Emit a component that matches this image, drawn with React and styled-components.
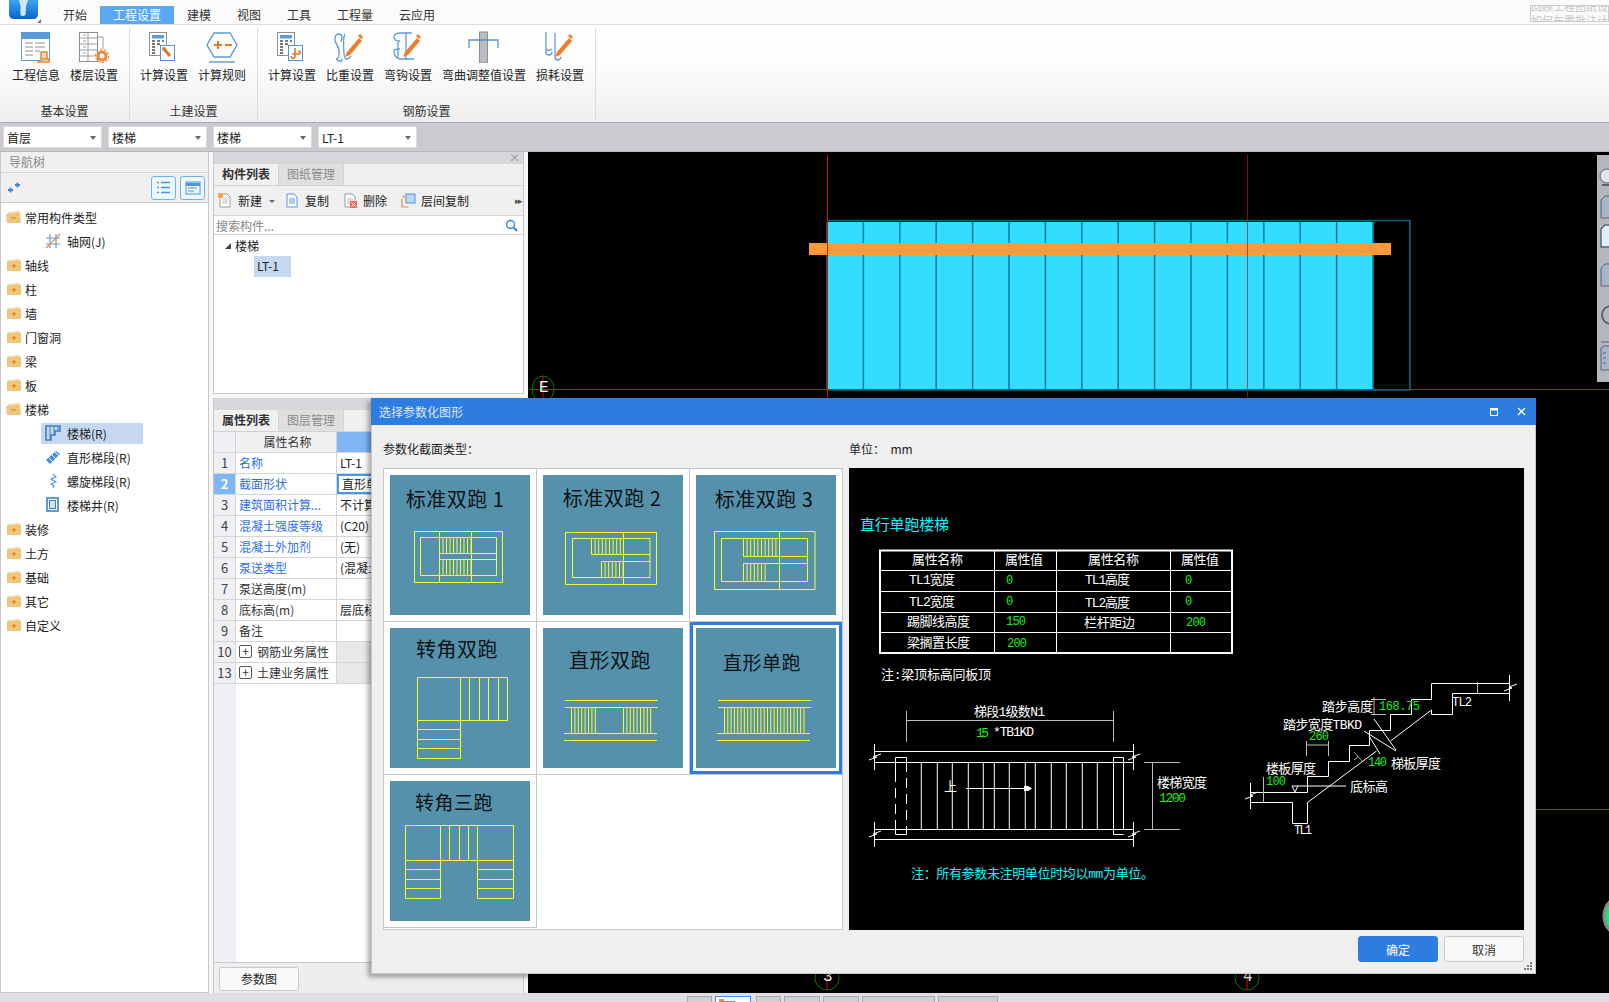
import React from 'react'
import styled, { createGlobalStyle } from 'styled-components'

const GlobalStyle = createGlobalStyle`
  html, body { margin: 0; padding: 0; background: #fff; }
  body {
    font-family: "Noto Sans CJK SC", "Liberation Sans", sans-serif;
    font-size: 12px;
    color: #222;
  }
  * { box-sizing: border-box; }
`

const Page = styled.div`
  position: relative;
  width: 1609px;
  height: 1002px;
  overflow: hidden;
  display: flex;
  flex-direction: column;
  background: #f2f2f2;
`

/* ---------- menu bar ---------- */
const MenuBar = styled.div`
  height: 25px;
  flex: none;
  display: flex;
  align-items: flex-end;
  background: #fbfbfb;
  border-bottom: 1px solid #dcdcdc;
`
const LogoBox = styled.div`
  width: 46px;
  height: 24px;
  flex: none;
  background: #fff;
  margin-right: 4px;
`
const MenuTab = styled.div`
  height: 18px;
  line-height: 18px;
  padding: 0 13px;
  text-align: center;
  font-size: 12px;
  color: ${p => (p.$active ? '#fff' : '#333')};
  background: ${p => (p.$active ? '#5aa7f3' : 'transparent')};
`
const NewsBox = styled.div`
  margin-left: auto;
  margin-bottom: 2px;
  width: 79px;
  height: 17px;
  border: 1px solid #ccc;
  overflow: hidden;
  font-size: 11px;
  line-height: 14px;
  color: #c4c4c4;
  white-space: nowrap;
  & > div:first-child { margin-top: -7px; }
`

/* ---------- ribbon ---------- */
const Ribbon = styled.div`
  height: 98px;
  flex: none;
  display: flex;
  background: linear-gradient(#ffffff 0%, #fdfdfd 40%, #eeeeee 100%);
  border-bottom: 1px solid #a9adb3;
`
const RibbonGroup = styled.div`
  width: ${p => p.$w}px;
  margin: 3px 0 2px;
  padding-left: ${p => p.$pad}px;
  border-right: 1px solid #dcdcdc;
  display: flex;
  flex-direction: column;
`
const RibbonButtons = styled.div`
  display: flex;
  gap: 10px;
  flex: 1;
`
const RibbonButton = styled.div`
  display: flex;
  flex-direction: column;
  align-items: center;
  padding-top: 3px;
  white-space: nowrap;
  svg { display: block; height: 32px; margin-bottom: 3px; }
`
const GroupTitle = styled.div`
  text-align: center;
  height: 22px;
  margin-left: -${p => p.$pad}px;
  padding-top: 2px;
  line-height: 22px;
  color: #333;
`

/* ---------- combo bar ---------- */
const ComboBar = styled.div`
  height: 29px;
  flex: none;
  display: flex;
  gap: 6px;
  padding: 3px 3px 0;
  background: #c9cbcf;
  border-bottom: 1px solid #b5b7bb;
`
const Combo = styled.div`
  width: 99px;
  height: 22px;
  background: #fff;
  border: 1px solid #d9d9d9;
  display: flex;
  align-items: center;
  justify-content: space-between;
  padding: 0 5px 0 3px;
  &::after {
    content: '';
    border: 3px solid transparent;
    border-top: 4px solid #666;
    margin-top: 4px;
  }
`

/* ---------- workspace ---------- */
const Workspace = styled.div`
  flex: 1;
  min-height: 0;
  display: flex;
  background: #f6f6f6;
`
const NavPanel = styled.div`
  width: 209px;
  flex: none;
  display: flex;
  flex-direction: column;
  background: #fff;
  border-right: 1px solid #c4c7cc;
  border-bottom: 1px solid #c4c7cc;
  border-left: 1px solid #c4c7cc;
`
const NavHeader = styled.div`
  height: 21px;
  line-height: 19px;
  padding-left: 8px;
  color: #888;
  background: #f0f0f0;
  border-bottom: 1px solid #d0d2d6;
`
const NavTools = styled.div`
  height: 30px;
  display: flex;
  align-items: center;
  gap: 4px;
  padding: 0 3px 0 6px;
  background: #f0f0f0;
  border-bottom: 1px solid #c9ccd1;
  & > svg { margin-right: auto; }
`
const ToolToggle = styled.div`
  width: 25px;
  height: 24px;
  border: 1px solid #6db0f3;
  border-radius: 3px;
  background: #eef6fe;
  display: flex;
  align-items: center;
  justify-content: center;
`
const TreeList = styled.div`
  padding-top: 2px;
`
const TreeRow = styled.div`
  height: 24px;
  display: flex;
  align-items: center;
  padding-left: ${p => (p.$child ? 40 : 5)}px;
`
const TreeLabel = styled.div`
  display: flex;
  align-items: center;
  height: 21px;
  gap: ${p => (p.$child ? 6 : 3)}px;
  padding: 0 ${p => (p.$child ? 4 : 0)}px;
  width: ${p => (p.$child ? '102px' : 'auto')};
  background: ${p => (p.$selected ? '#c6d8f0' : 'transparent')};
  white-space: nowrap;
`

const MiddleColumn = styled.div`
  width: 311px;
  flex: none;
  margin: 0 4px;
  display: flex;
  flex-direction: column;
  gap: 4px;
`
const Panel = styled.div`
  display: flex;
  flex-direction: column;
  height: ${p => (p.$h ? `${p.$h}px` : 'auto')};
  flex: ${p => (p.$h ? 'none' : 1)};
  min-height: 0;
  border-right: 1px solid #c4c7cc;
  border-left: 1px solid #c4c7cc;
  border-bottom: ${p => (p.$h ? '1px solid #c4c7cc' : 'none')};
  background: #fff;
`
const PanelGrip = styled.div`
  height: 12px;
  flex: none;
  background: #d6d7da;
  color: #888;
  text-align: right;
  padding-right: 3px;
  font-size: 11px;
  line-height: 10px;
`
const TabStrip = styled.div`
  height: 22px;
  flex: none;
  display: flex;
  background: #f0f0f0;
  border-bottom: 1px solid #d0d2d6;
`
const PanelTab = styled.div`
  width: 65px;
  text-align: center;
  line-height: 20px;
  color: ${p => (p.$active ? '#333' : '#8c8c8c')};
  font-weight: ${p => (p.$active ? 700 : 400)};
  background: ${p => (p.$active ? '#f0f0f0' : '#dfdfdf')};
  border-right: 1px solid #d0d2d6;
`
const PanelTools = styled.div`
  height: 30px;
  flex: none;
  display: flex;
  align-items: center;
  padding-left: 4px;
  background: #f0f0f0;
  border-bottom: 1px solid #d0d2d6;
`
const PanelTool = styled.div`
  display: flex;
  align-items: center;
  gap: 5px;
  margin-right: ${p => p.$gap}px;
`
const Caret = styled.span`
  border: 3px solid transparent;
  border-top: 3px solid #666;
  margin: 4px 10px 0 7px;
`
const MoreMark = styled.span`
  margin-left: auto;
  padding-right: 2px;
  font-size: 9px;
  letter-spacing: -2px;
  color: #555;
`
const SearchRow = styled.div`
  height: 19px;
  flex: none;
  display: flex;
  align-items: center;
  justify-content: space-between;
  padding: 0 5px 0 2px;
  color: #888;
  border-bottom: 1px solid #d0d2d6;
`
const CompRoot = styled.div`
  height: 21px;
  display: flex;
  align-items: center;
  gap: 4px;
  padding-left: 11px;
  &::before {
    content: '';
    border-right: 6px solid #444;
    border-top: 6px solid transparent;
  }
`
const CompLeaf = styled.div`
  width: 37px;
  height: 21px;
  line-height: 20px;
  margin-left: 40px;
  padding-left: 3px;
  background: #c6d8f0;
`

const PropRow = styled.div`
  display: grid;
  grid-template-columns: 22px 101px 1fr;
  height: 21px;
  flex: none;
  border-bottom: 1px solid #d5d5d5;
`
const PropNo = styled.div`
  text-align: center;
  line-height: 20px;
  font-size: 13px;
  color: ${p => (p.$active ? '#fff' : '#444')};
  font-weight: ${p => (p.$active ? 700 : 400)};
  background: ${p => (p.$active ? '#7db8f5' : '#eef0f3')};
  border-right: 1px solid #d5d5d5;
`
const PropName = styled.div`
  display: flex;
  align-items: center;
  gap: 5px;
  padding-left: 3px;
  padding-bottom: 1px;
  white-space: nowrap;
  color: ${p => (p.$blue ? '#2f6fe6' : '#333')};
  background: ${p => (p.$head ? '#f0f0f0' : '#fff')};
  justify-content: ${p => (p.$head ? 'center' : 'flex-start')};
  border-right: 1px solid #d5d5d5;
`
const PropValue = styled.div`
  padding-left: 3px;
  line-height: ${p => (p.$active ? '16px' : '19px')};
  white-space: nowrap;
  background: ${p => (p.$head ? '#7fb6f6' : p.$group ? '#e8e8e8' : '#fff')};
  border: ${p => (p.$active ? '2px solid #4a97ea' : 'none')};
`
const ExpandBox = styled.span`
  width: 13px;
  height: 13px;
  border: 1px solid #555;
  border-radius: 2px;
  text-align: center;
  line-height: 10px;
  font-size: 12px;
`
const PropFiller = styled.div`
  flex: 1;
  min-height: 0;
  display: grid;
  grid-template-columns: 22px 1fr;
  & > div:first-child { background: #eef0f3; }
  border-bottom: 1px solid #c4c7cc;
`
const PropFooter = styled.div`
  height: 30px;
  flex: none;
  background: #eeeeee;
  padding: 4px 0 0 5px;
`
const PlainButton = styled.div`
  width: 80px;
  height: 24px;
  line-height: 22px;
  text-align: center;
  background: #fafafa;
  border: 1px solid #c4c9d4;
  border-radius: 3px;
`

/* ---------- CAD canvas ---------- */
const Canvas = styled.div`
  position: relative;
  flex: 1;
  min-width: 0;
  background: #000;
  overflow: hidden;
  svg.cad { display: block; }
`
const ViewTools = styled.div`
  position: absolute;
  top: 3px;
  right: 0;
  width: 12px;
  height: 227px;
  background: #b4b7bd;
  overflow: hidden;
`
const StatusBar = styled.div`
  height: 9px;
  flex: none;
  background: #dedfe2;
  padding: 3px 0 0 687px;
  display: flex;
  gap: 3px;
  overflow: hidden;
`
const StatusTab = styled.div`
  width: ${p => p.$w}px;
  margin-right: ${p => p.$gap || 0}px;
  height: 14px;
  background: ${p => (p.$active ? '#fff' : '#d0d0d2')};
  border: 1px solid ${p => (p.$active ? '#3b94f0' : '#a9a9ab')};
  padding: 2px 0 0 3px;
  svg { display: block; }
`

/* ---------- dialog ---------- */
const Dialog = styled.div`
  position: absolute;
  left: 371px;
  top: 398px;
  width: 1165px;
  height: 576px;
  display: flex;
  flex-direction: column;
  background: #efefef;
  border: 1px solid #c3c6cb;
  border-top: none;
  box-shadow: -3px 3px 5px rgba(0, 0, 0, 0.35);
`
const DialogTitle = styled.div`
  height: 27px;
  flex: none;
  display: flex;
  align-items: center;
  padding: 0 10px 0 8px;
  margin: 0 -1px;
  background: #2d7de0;
  color: #dfeaf8;
`
const TitleActions = styled.div`
  margin-left: auto;
  display: flex;
  align-items: center;
  gap: 19px;
`
const DialogBody = styled.div`
  display: flex;
  gap: 6px;
  padding: 0 11px 0 11px;
`
const SideColumn = styled.div`
  display: flex;
  flex-direction: column;
`
const SideLabel = styled.div`
  height: 43px;
  line-height: 47px;
  white-space: pre;
`
const TypeGrid = styled.div`
  width: 460px;
  height: 462px;
  border: 1px solid #c6c6c8;
  background: #fff;
  display: grid;
  grid-template-columns: 153px 153px 152px;
  grid-template-rows: 153px 153px 153px;
`
const TypeCell = styled.div`
  display: flex;
  align-items: center;
  justify-content: center;
  border-right: ${p => (p.$last ? 'none' : '1px solid #c6c6c8')};
  border-bottom: 1px solid #c6c6c8;
  box-shadow: ${p => (p.$selected ? 'inset 0 0 0 3px #2d7de0' : 'none')};
  svg { display: block; background: #5591ab; }
`
const Preview = styled.div`
  width: 675px;
  height: 462px;
  background: #000;
  svg { display: block; }
`
const DialogFooter = styled.div`
  display: flex;
  justify-content: flex-end;
  gap: 6px;
  padding: 6px 11px 0 0;
`
const DialogButton = styled.div`
  width: 80px;
  height: 26px;
  line-height: 25px;
  text-align: center;
  border-radius: 3px;
  color: ${p => (p.$primary ? '#fff' : '#333')};
  background: ${p => (p.$primary ? '#2d7de0' : '#f8f8f8')};
  border: 1px solid ${p => (p.$primary ? '#2d7de0' : '#c4c9d4')};
`
const ResizeGrip = styled.svg`
  position: absolute;
  right: 2px;
  bottom: 2px;
`
const CadText = styled.text`
  font-family: "Liberation Mono", "Noto Sans CJK SC", monospace;
  font-size: ${p => p.$size || 13}px;
  fill: ${p => p.$fill || '#fff'};
  dominant-baseline: central;
`
const ThumbText = styled.text`
  font-family: "Noto Sans CJK SC", sans-serif;
  font-size: ${p => p.$size || 20}px;
  letter-spacing: 0.5px;
  fill: #0c1215;
  text-anchor: middle;
  dominant-baseline: central;
`

/* ---------- small icons ---------- */
const FolderIcon = ({ open }) => (
  <svg width="16" height="14" viewBox="0 0 16 14">
    <path d="M2 2h5l1-1h6v3H2z" fill="#f5dca6" />
    <path d={open ? 'M0 4l14-1 1 10H1z' : 'M1 3h14v10H1z'} fill="#eec679" />
    {open ? <path d="M5 8h5" stroke="#d29a3a" strokeWidth="1.4" /> : <path d="M6 8h4M8 6v4" stroke="#d98f1f" strokeWidth="1.4" />}
  </svg>
)

const Glyph = ({ name }) => {
  if (name === 'grid') return (
    <svg width="16" height="16" viewBox="0 0 16 16" fill="none" strokeWidth="1.2">
      <path d="M5 1v14M11 1v14M1 5h14M1 11h14" stroke="#5c9ad8" />
      <path d="M1 15L15 1" stroke="#ee8a3c" />
    </svg>
  )
  if (name === 'stair') return (
    <svg width="16" height="16" viewBox="0 0 16 16" fill="none" stroke="#3a82d0" strokeWidth="1.6">
      <path d="M1 1h14v5H10v4H6v5H1z" />
      <path d="M5 1v14M9 1v9M13 1v5" strokeWidth="1" />
    </svg>
  )
  if (name === 'run') return (
    <svg width="16" height="16" viewBox="0 0 16 16">
      <path d="M1 11L11 2l4 3-10 10z" fill="#3f8ee0" />
      <path d="M4 9l4 4M7 6l4 4M10 3l4 4" stroke="#fff" />
    </svg>
  )
  if (name === 'spiral') return (
    <svg width="16" height="16" viewBox="0 0 16 16" fill="none" stroke="#4a90d9" strokeWidth="1.1">
      <path d="M8 1l3 3-5 2 5 3-5 2 3 2-1 2" />
    </svg>
  )
  return (
    <svg width="16" height="16" viewBox="0 0 16 16" fill="none">
      <rect x="2" y="1" width="11" height="13" stroke="#3a82d0" strokeWidth="1.6" />
      <rect x="4.5" y="3.5" width="6" height="8" fill="#d3e4f7" stroke="#3a82d0" />
    </svg>
  )
}

const DocIcon = ({ kind }) => (
  <svg width="15" height="15" viewBox="0 0 15 15" fill="none">
    {kind === 'layer' ? (
      <g>
        <rect x="5" y="1" width="9" height="9" fill="#bcd8f6" stroke="#4e94dc" />
        <path d="M4 3H2.5v2M1 6v8h6.5" stroke="#ee8a3c" strokeWidth="1.2" />
      </g>
    ) : (
      <g>
        <path d="M2 1h7l3 3v10H2z" fill="#fff" stroke={kind === 'copy' ? '#4e94dc' : '#999'} />
        <path d="M4 6h6M4 8h6M4 10h6" stroke={kind === 'copy' ? '#4e94dc' : '#bbb'} />
        {kind === 'new' && <path d="M0 0h5v5H0z" fill="#f3a64a" />}
        {kind === 'del' && <g><rect x="7" y="8" width="7" height="7" fill="#e66" /><path d="M8.5 9.5l4 4M12.5 9.5l-4 4" stroke="#fff" /></g>}
      </g>
    )}
  </svg>
)

const Calc = ({ children }) => (
  <g>
    <rect x="2.5" y="1.5" width="17" height="23" fill="#fff" stroke="#8b8e92" />
    <rect x="5" y="4" width="12" height="3.5" fill="#5c9ad8" />
    <path d="M5 10h3M10 10h3M15 10h2M5 13h3M10 13h3M5 16h3M5 19h3M5 22h3" stroke="#777" strokeWidth="2" />
    <rect x="13.5" y="14.5" width="14" height="15" fill="#fff" stroke="#4e94dc" />
    {children}
  </g>
)
const Pencil = () => (
  <g>
    <path d="M14 21L26 7l3 3-12 14-5 2z" fill="#ed7d2e" />
    <path d="M25 5l2-2 3 3-2 2z" fill="#ed7d2e" />
  </g>
)

const RibbonIcon = ({ name }) => {
  const common = { width: 34, height: 32, viewBox: '0 0 34 32', fill: 'none' }
  switch (name) {
    case 'info': return (
      <svg {...common}>
        <rect x="2.5" y="1.5" width="28" height="28" fill="#fff" stroke="#5c9ad8" />
        <rect x="2" y="1" width="29" height="7" fill="#5c9ad8" />
        <path d="M6 12h8M6 16h8M6 20h8M6 24h8M16 12h10M16 16h10M16 20h5" stroke="#8b8e92" />
        <path d="M18 31h12v-3h-8v-7h6v7" fill="#f2d7b8" stroke="#e08a3c" strokeWidth="1.5" />
      </svg>
    )
    case 'floor': return (
      <svg {...common}>
        <rect x="2.5" y="1.5" width="18" height="29" fill="#fff" stroke="#8b8e92" />
        <path d="M2 7h18M2 13h18M2 19h18M2 25h18M11 2v28M6 4h3M6 10h3M6 16h3M6 22h3" stroke="#9a9da1" />
        <path d="M20 6h6v12" stroke="#9a9da1" />
        <circle cx="25" cy="25" r="4" stroke="#ed8a3c" strokeWidth="3" />
        <circle cx="25" cy="25" r="6.5" stroke="#ed8a3c" strokeWidth="1.4" strokeDasharray="2 2" />
      </svg>
    )
    case 'calcWrench': return (
      <svg {...common}><Calc><path d="M17 18l6 7" stroke="#e07a24" strokeWidth="3" /><circle cx="17" cy="18" r="2" fill="#e07a24" /></Calc></svg>
    )
    case 'calcPlus': return (
      <svg {...common}><Calc><path d="M20 17v9c0 2-4 2-4-1M23 20c3 0 3 3 0 3h-6" stroke="#e07a24" strokeWidth="1.6" /></Calc></svg>
    )
    case 'rule': return (
      <svg {...common}>
        <path d="M9 2h16l7 12-7 12H9L2 14z" stroke="#5c9ad8" strokeWidth="1.4" />
        <path d="M9 14h8M13 10v8M20 14h7" stroke="#e07a24" strokeWidth="2" />
        <path d="M4 31h26" stroke="#5c9ad8" strokeWidth="1.4" />
      </svg>
    )
    case 'density': return (
      <svg {...common}>
        <path d="M6 3C1 3 1 10 4 14s3 14-1 14 M6 3c3 0 4 4 2 8M12 3c-2 2-2 25 1 25 2 0 4-1 5-3M3 28c3 3 6 3 6 0" stroke="#5c9ad8" strokeWidth="1.3" />
        <Pencil />
      </svg>
    )
    case 'hook': return (
      <svg {...common}>
        <path d="M3 6c0-4 4-4 6-4h12M3 6c0 4 4 4 6 4M7 10v18M15 2v26M3 20c0-2 4-2 6-2M3 20c0 4 2 7 6 8h14" stroke="#5c9ad8" strokeWidth="1.3" />
        <Pencil />
      </svg>
    )
    case 'bend': return (
      <svg {...common}>
        <rect x="12.5" y="1" width="8" height="31" fill="#b9bcc1" stroke="#8b8e92" />
        <path d="M2 17V9h29v8" stroke="#4e94dc" strokeWidth="1.3" />
      </svg>
    )
    default: return (
      <svg {...common}>
        <path d="M3 1v20c0 4 6 4 6 0M12 2v24c0 4 5 4 6 0M3 18c2 2 4 2 6 0" stroke="#5c9ad8" strokeWidth="1.3" />
        <Pencil />
      </svg>
    )
  }
}

/* ---------- stair thumbnails ---------- */
const rect = (x1, y1, x2, y2) => `M${x1} ${y1}H${x2}V${y2}H${x1}Z`
const hl = (x1, x2, y) => `M${x1} ${y}H${x2}`
const vl = (x, y1, y2) => `M${x} ${y1}V${y2}`
const hatch = (x1, x2, y1, y2, step) => {
  let d = ''
  for (let x = x1; x <= x2 + 0.01; x += step) d += vl(x, y1, y2)
  return d
}

const thumbs = [
  {
    title: '标准双跑 1', tx: 65, ty: 23,
    d: rect(24.5, 56.5, 112.5, 107.5) + rect(30.5, 62.5, 106.5, 100.5) + vl(49.5, 56, 107) + vl(81.5, 56, 107) +
      hl(49.5, 106.5, 78.5) + hl(49.5, 106.5, 84.5) + hatch(49.5, 81.5, 62.5, 78.5, 3.5) + hatch(49.5, 81.5, 84.5, 100.5, 3.5),
  },
  {
    title: '标准双跑 2', tx: 69, ty: 22,
    d: rect(22.5, 57.5, 113.5, 109.5) + rect(29.5, 63.5, 107, 102.5) + vl(80.5, 57, 109) +
      hl(48.5, 107, 79.5) + hl(58.5, 107, 86.5) + hatch(48.5, 80.5, 63.5, 79.5, 3.6) + hatch(58.5, 80.5, 86.5, 102.5, 3.6),
  },
  {
    title: '标准双跑 3', tx: 68, ty: 23,
    d: rect(18.5, 56.5, 119, 114.5) + rect(25.5, 63.5, 111.5, 106.5) + vl(83.5, 56, 114) +
      hl(47.5, 111.5, 81.5) + hl(47.5, 111.5, 88.5) + hatch(47.5, 83.5, 63.5, 81.5, 3.6) + hatch(47.5, 69.5, 88.5, 106.5, 3.6),
  },
  {
    title: '转角双跑', tx: 67, ty: 20,
    d: rect(27.5, 49.5, 117.5, 92.5) + rect(27.5, 92.5, 70.5, 130.5) + vl(70.5, 49, 92) + vl(79.5, 49, 92) + vl(89.5, 49, 92) +
      vl(98.5, 49, 92) + vl(108.5, 49, 92) + hl(27.5, 70.5, 101.5) + hl(27.5, 70.5, 111.5) + hl(27.5, 70.5, 120.5),
  },
  {
    title: '直形双跑', tx: 67, ty: 31,
    d: hl(22, 115, 72.5) + hl(22, 115, 79.5) + hl(21, 114, 105.5) + hl(21, 114, 112.5) +
      hatch(28.5, 55.5, 79.5, 105.5, 3.4) + hatch(80.5, 108, 79.5, 105.5, 3.4),
  },
  {
    title: '直形单跑', tx: 66, ty: 33, size: 19, selected: true,
    d: hl(22, 115, 72.5) + hl(22, 115, 79.5) + hl(21, 114, 105.5) + hl(21, 114, 112.5) + hatch(28.5, 108, 79.5, 105.5, 3.31),
  },
  {
    title: '转角三跑', tx: 64, ty: 20, size: 19,
    d: rect(15.5, 44.5, 123.5, 79.5) + vl(50.5, 44, 79) + vl(59.5, 44, 79) + vl(69.5, 44, 79) + vl(78.5, 44, 79) + vl(87.5, 44, 79) +
      rect(15.5, 79.5, 50.5, 117.5) + rect(87.5, 79.5, 123.5, 117.5) +
      hl(15.5, 50.5, 88.5) + hl(15.5, 50.5, 98.5) + hl(15.5, 50.5, 107.5) + hl(87.5, 123.5, 88.5) + hl(87.5, 123.5, 98.5) + hl(87.5, 123.5, 107.5),
  },
]

const StairThumb = ({ title, tx, ty, d, size }) => (
  <svg width="140" height="140" viewBox="0 0 140 140">
    <ThumbText x={tx} y={ty} $size={size}>{title}</ThumbText>
    <path d={d} fill="none" stroke="#f6ff2e" strokeWidth="1" />
  </svg>
)

/* ---------- parameter drawing shown in the dialog, in page coordinates ---------- */
const Green = '#18ee18'
const Cyan = '#18f0ff'

const ParamDrawing = () => {
  const treads = [71.3, 87.3, 102.3, 118.3, 133.3, 144.3, 159.3, 175.3, 185.3, 201.3, 216.3, 232.3, 247.3]
  return (
    <svg width="675" height="462" viewBox="849 468 675 462" fill="none">
      <CadText x="860" y="526" $size={15} $fill={Cyan} textLength="89">直行单跑楼梯</CadText>

      <path d="M880 550.5H1232V653H880Z" stroke="#fff" strokeWidth="2" />
      <path d="M880 570.5H1232M880 591.5H1232M880 612.5H1232M880 632.5H1232M994.5 550V653M1056.5 550V653M1170.5 550V653" stroke="#fff" />
      <CadText x="912" y="560" textLength="51">属性名称</CadText>
      <CadText x="1005" y="560" textLength="38">属性值</CadText>
      <CadText x="1088" y="560" textLength="51">属性名称</CadText>
      <CadText x="1181" y="560" textLength="38">属性值</CadText>

      <CadText x="909" y="580" textLength="46">TL1宽度</CadText>
      <CadText x="1006" y="581" $size={12} $fill={Green}>0</CadText>
      <CadText x="1085" y="580" textLength="45">TL1高度</CadText>
      <CadText x="1185" y="581" $size={12} $fill={Green}>0</CadText>

      <CadText x="909" y="602" textLength="46">TL2宽度</CadText>
      <CadText x="1006" y="602" $size={12} $fill={Green}>0</CadText>
      <CadText x="1085" y="603" textLength="45">TL2高度</CadText>
      <CadText x="1185" y="602" $size={12} $fill={Green}>0</CadText>

      <CadText x="907" y="622" textLength="63">踢脚线高度</CadText>
      <CadText x="1006" y="622" $size={12} $fill={Green} textLength="20">150</CadText>
      <CadText x="1084" y="623" textLength="51">栏杆距边</CadText>
      <CadText x="1186" y="623" $size={12} $fill={Green} textLength="20">200</CadText>

      <CadText x="907" y="643" textLength="63">梁搁置长度</CadText>
      <CadText x="1007" y="644" $size={12} $fill={Green} textLength="20">200</CadText>

      <CadText x="881" y="675" textLength="110">注:梁顶标高同板顶</CadText>

      <CadText x="974" y="712" textLength="71">梯段1级数N1</CadText>
      <path d="M906.5 711V742M1113.5 711V742M906 720.5H1113" stroke="#bbb" />
      <CadText x="976" y="733" $size={13} $fill={Green} textLength="13">15</CadText>
      <CadText x="993" y="732" textLength="41">*TB1KD</CadText>

      <path d="M875 751.5H1133M875 762.5H1133M875 829.5H1133M875 839.5H1133" stroke="#fff" />
      <path d="M874.5 744V770M874.5 822V847M1133.5 744V770M1133.5 822V847" stroke="#fff" />
      <path d="M869 760l8-3-4 0 8-3M869 837l8-3-4 0 8-3M1128 760l8-3-4 0 8-3M1128 837l8-3-4 0 8-3" stroke="#fff" />
      <path d="M895.5 772V757.5H906.5V762M906.5 829V834.5H895.5V822M1113.5 762V757.5H1123.5V829M1123.5 834.5H1113.5V829" stroke="#fff" />
      <path d="M895.5 772V829M906.5 762V829" stroke="#fff" strokeDasharray="10 6" />
      <path d={treads.map(t => `M${850 + t} 762V829`).join('')} stroke="#fff" />
      <path d="M1113.5 762V829" stroke="#fff" />
      <CadText x="944" y="787" $size={13}>上</CadText>
      <path d="M966 788.5H1024" stroke="#fff" />
      <path d="M1024 786H1028L1032 788.5L1028 791H1024Z" fill="#fff" />

      <path d="M1144 762.5H1180M1144 829.5H1180M1152.5 762V830" stroke="#bbb" />
      <CadText x="1157" y="783" textLength="50">楼梯宽度</CadText>
      <CadText x="1159" y="798" $size={13} $fill={Green} textLength="27">1200</CadText>

      <CadText x="911" y="874" $size={13} $fill={Cyan} textLength="243">注：所有参数未注明单位时均以mm为单位。</CadText>

      <path d="M1250.7 792.5H1307.5V776.5H1328.5V761.5H1349.5V745.5H1369.5V730.5H1390.5V714.5H1411.5V699.5H1431.5V683.5H1509.5" stroke="#fff" />
      <path d="M1250.7 802.5H1292.5V823.5H1307.5V802.5L1376.5 751M1390.5 741L1431.5 710V714.5H1452.5V693.5H1509.5" stroke="#fff" />
      <path d="M1250.5 783V809M1509.5 675V701" stroke="#fff" />
      <path d="M1245 799l8-3-3-1 8-3M1504 691l8-3-3-1 8-3" stroke="#fff" />
      <path d="M1364 731L1396 751M1374 719L1396 750M1369 736L1380 754" stroke="#fff" />
      <path d="M1354 752L1362 761M1358 757L1354 760" stroke="#aaa" />
      <path d="M1371 699.5H1386M1371 714.5H1386M1374 697V715M1306.5 741V756M1328.5 741V756M1306 745H1329" stroke="#bbb" />
      <path d="M1263.5 777V802M1477.5 682V693" stroke="#bbb" />
      <path d="M1292 786H1346M1292 786L1295 792L1298 786" stroke="#fff" />

      <CadText x="1322" y="707" textLength="51">踏步高度</CadText>
      <CadText x="1379" y="707" $size={12} $fill={Green} textLength="41">168.75</CadText>
      <CadText x="1283" y="725" textLength="79">踏步宽度TBKD</CadText>
      <CadText x="1309" y="737" $size={12} $fill={Green} textLength="20">260</CadText>
      <CadText x="1266" y="769" textLength="50">楼板厚度</CadText>
      <CadText x="1266" y="782" $size={12} $fill={Green} textLength="20">100</CadText>
      <CadText x="1368" y="763" $size={12} $fill={Green} textLength="19">140</CadText>
      <CadText x="1391" y="764" textLength="50">梯板厚度</CadText>
      <CadText x="1350" y="787" textLength="38">底标高</CadText>
      <CadText x="1294" y="831" $size={12} textLength="18">TL1</CadText>
      <CadText x="1452" y="703" $size={12} textLength="20">TL2</CadText>
    </svg>
  )
}

/* ---------- model view behind the dialog, in page coordinates ---------- */
const Bubble = ({ cx, cy, label, rx = 12, ry = 12 }) => (
  <g>
    <ellipse cx={cx} cy={cy} rx={rx} ry={ry} stroke="#0a7a0a" fill="none" />
    <line x1={cx} y1={cy - ry} x2={cx} y2={cy + ry} stroke="#d01010" />
    <CadText x={cx - 4} y={cy - 1} $size={16}>{label}</CadText>
  </g>
)

const ModelView = () => {
  const lines = Array.from({ length: 16 }, (_, i) => 827 + 36.4 * i)
  return (
    <svg className="cad" width="1081" height="841" viewBox="528 152 1081 841" fill="none">
      <rect x="827" y="222" width="546" height="167" fill="#33ddff" />
      <path d="M827 220.5H1410V390H827" stroke="#0a5f78" strokeWidth="1.5" />
      <path d="M1373.5 220V389M1409.5 220V390" stroke="#0a5f78" />
      <path d={lines.map(x => `M${x.toFixed(1)} 222V389`).join('')} stroke="#0a7390" strokeWidth="1.4" />
      <rect x="809" y="243" width="582" height="12" fill="#ff9a36" />
      <path d="M827.5 155V400" stroke="#d01010" />
      <path d="M1247.5 155V400" stroke="#a02020" strokeWidth="0.7" />
      <path d="M530 389.5H1609" stroke="#d01010" />
      <path d="M1536 809.5H1609" stroke="#d01010" />
      <Bubble cx={543} cy={389} label="E" rx={11} ry={13} />
      <Bubble cx={827} cy={978} label="3" />
      <Bubble cx={1247} cy={978} label="4" />
      <circle cx="1625" cy="916" r="21" fill="#20e080" stroke="#8a8a8a" strokeWidth="3" />
    </svg>
  )
}

const ViewToolIcons = () => (
  <svg width="12" height="227" viewBox="0 0 12 227" fill="none" stroke="#5a6272">
    <circle cx="10" cy="21" r="7" fill="#dfe3ea" />
    <path d="M5 30H12" strokeWidth="2" />
    <path d="M4 45l4-4h6v22H4z" fill="#a8b4c8" />
    <path d="M4 74l4-4h6v22H4z" fill="#e3eefc" strokeWidth="1.4" />
    <path d="M4 113l4-4h6v22H4z" fill="#a8b4c8" />
    <circle cx="14" cy="160" r="9" strokeWidth="2" />
    <path d="M4 187h8" />
    <path d="M4 193l3-2h7v24H4z" fill="#a8b4c8" />
    <path d="M6 198h3M6 203h3M6 208h3" />
  </svg>
)

const treeItems = [
  { label: '常用构件类型', open: true },
  { label: '轴网(J)', child: true, glyph: 'grid' },
  { label: '轴线' }, { label: '柱' }, { label: '墙' }, { label: '门窗洞' }, { label: '梁' }, { label: '板' },
  { label: '楼梯', open: true },
  { label: '楼梯(R)', child: true, glyph: 'stair', selected: true },
  { label: '直形梯段(R)', child: true, glyph: 'run' },
  { label: '螺旋梯段(R)', child: true, glyph: 'spiral' },
  { label: '楼梯井(R)', child: true, glyph: 'well' },
  { label: '装修' }, { label: '土方' }, { label: '基础' }, { label: '其它' }, { label: '自定义' },
]

const ribbonGroups = [
  { title: '基本设置', w: 130, pad: 12, items: [['工程信息', 'info'], ['楼层设置', 'floor']] },
  { title: '土建设置', w: 128, pad: 10, items: [['计算设置', 'calcWrench'], ['计算规则', 'rule']] },
  {
    title: '钢筋设置', w: 338, pad: 10,
    items: [['计算设置', 'calcPlus'], ['比重设置', 'density'], ['弯钩设置', 'hook'], ['弯曲调整值设置', 'bend'], ['损耗设置', 'loss']],
  },
]

const propRows = [
  { no: 1, name: '名称', value: 'LT-1', blue: true },
  { no: 2, name: '截面形状', value: '直形单跑', blue: true, active: true },
  { no: 3, name: '建筑面积计算...', value: '不计算', blue: true },
  { no: 4, name: '混凝土强度等级', value: '(C20)', blue: true },
  { no: 5, name: '混凝土外加剂', value: '(无)', blue: true },
  { no: 6, name: '泵送类型', value: '(混凝土泵)', blue: true },
  { no: 7, name: '泵送高度(m)', value: '' },
  { no: 8, name: '底标高(m)', value: '层底标高' },
  { no: 9, name: '备注', value: '' },
  { no: 10, name: '钢筋业务属性', value: '', group: true },
  { no: 13, name: '土建业务属性', value: '', group: true },
]

const App = () => (
  <Page>
    <GlobalStyle />
    <MenuBar>
      <LogoBox>
        <svg width="46" height="24" viewBox="0 0 46 24">
          <defs>
            <linearGradient id="logoFill" x1="0" y1="0" x2="0" y2="1">
              <stop offset="0" stopColor="#39a6f2" />
              <stop offset="1" stopColor="#0a62cf" />
            </linearGradient>
          </defs>
          <path d="M9 0H38V14q0 5-5 5H14q-5 0-5-5z" fill="url(#logoFill)" />
          <path d="M19 0H28L26 6 25.5 15Q23 17 20.5 15L20.5 6z" fill="#cfe9fb" />
          <path d="M37 23h4v-4z" fill="#777" />
        </svg>
      </LogoBox>
      {['开始', '工程设置', '建模', '视图', '工具', '工程量', '云应用'].map((t, i) => (
        <MenuTab key={t} $active={i === 1}>{t}</MenuTab>
      ))}
      <NewsBox>
        <div>回顾工程图纸设计</div>
        <div>如何布置批注计划</div>
      </NewsBox>
    </MenuBar>

    <Ribbon>
      {ribbonGroups.map(g => (
        <RibbonGroup key={g.title} $w={g.w} $pad={g.pad}>
          <RibbonButtons>
            {g.items.map(([label, icon]) => (
              <RibbonButton key={label + icon}>
                <RibbonIcon name={icon} />
                {label}
              </RibbonButton>
            ))}
          </RibbonButtons>
          <GroupTitle $pad={g.pad}>{g.title}</GroupTitle>
        </RibbonGroup>
      ))}
    </Ribbon>

    <ComboBar>
      {['首层', '楼梯', '楼梯', 'LT-1'].map((t, i) => <Combo key={i}>{t}</Combo>)}
    </ComboBar>

    <Workspace>
      <NavPanel>
        <NavHeader>导航树</NavHeader>
        <NavTools>
          <svg width="14" height="12" viewBox="0 0 14 12">
            <path d="M1 8h5M3.5 5.5v5" stroke="#3a82d0" strokeWidth="1.8" />
            <path d="M8 3h5M10.5 .5v5" stroke="#3a82d0" strokeWidth="1.8" />
          </svg>
          <ToolToggle>
            <svg width="15" height="13" viewBox="0 0 15 13" fill="none" stroke="#4e94dc">
              <path d="M1 1.5h2M5 1.5h9M1 6.5h2M5 6.5h9M1 11.5h2M5 11.5h9" strokeWidth="1.3" />
            </svg>
          </ToolToggle>
          <ToolToggle>
            <svg width="16" height="14" viewBox="0 0 16 14" fill="none" stroke="#4e94dc">
              <rect x="1" y="1" width="14" height="12" />
              <path d="M1 3.5h14" strokeWidth="3" />
              <path d="M3 7h9M3 10h6" />
            </svg>
          </ToolToggle>
        </NavTools>
        <TreeList>
          {treeItems.map(item => (
            <TreeRow key={item.label} $child={item.child}>
              <TreeLabel $child={item.child} $selected={item.selected}>
                {item.child ? <Glyph name={item.glyph} /> : <FolderIcon open={item.open} />}
                {item.label}
              </TreeLabel>
            </TreeRow>
          ))}
        </TreeList>
      </NavPanel>

      <MiddleColumn>
        <Panel $h={242}>
          <PanelGrip>×</PanelGrip>
          <TabStrip>
            <PanelTab $active>构件列表</PanelTab>
            <PanelTab>图纸管理</PanelTab>
          </TabStrip>
          <PanelTools>
            <PanelTool $gap={0}><DocIcon kind="new" />新建</PanelTool>
            <Caret />
            <PanelTool $gap={14}><DocIcon kind="copy" />复制</PanelTool>
            <PanelTool $gap={14}><DocIcon kind="del" />删除</PanelTool>
            <PanelTool $gap={0}><DocIcon kind="layer" />层间复制</PanelTool>
            <MoreMark>▸▸</MoreMark>
          </PanelTools>
          <SearchRow>
            搜索构件...
            <svg width="13" height="13" viewBox="0 0 13 13" fill="none" stroke="#3a88d0" strokeWidth="1.4">
              <circle cx="5.5" cy="5.5" r="4" />
              <path d="M8.5 8.5L12 12" strokeWidth="2" />
            </svg>
          </SearchRow>
          <div>
            <CompRoot>楼梯</CompRoot>
            <CompLeaf>LT-1</CompLeaf>
          </div>
        </Panel>

        <Panel>
          <PanelGrip />
          <TabStrip>
            <PanelTab $active>属性列表</PanelTab>
            <PanelTab>图层管理</PanelTab>
          </TabStrip>
          <PropRow>
            <PropNo />
            <PropName $head>属性名称</PropName>
            <PropValue $head />
          </PropRow>
          {propRows.map(r => (
            <PropRow key={r.no}>
              <PropNo $active={r.active}>{r.no}</PropNo>
              <PropName $blue={r.blue}>
                {r.group && <ExpandBox>+</ExpandBox>}
                {r.name}
              </PropName>
              <PropValue $active={r.active} $group={r.group}>{r.value}</PropValue>
            </PropRow>
          ))}
          <PropFiller><div /><div /></PropFiller>
          <PropFooter><PlainButton>参数图</PlainButton></PropFooter>
        </Panel>
      </MiddleColumn>

      <Canvas>
        <ModelView />
        <ViewTools><ViewToolIcons /></ViewTools>
      </Canvas>
    </Workspace>

    <StatusBar>
      <StatusTab $w={25} />
      <StatusTab $active $w={36} $gap={2}>
        <svg width="16" height="6" viewBox="0 0 16 6">
          <rect width="5" height="6" fill="#f08a30" />
          <rect x="5" y="2" width="11" height="4" fill="#5c9ad8" />
        </svg>
      </StatusTab>
      <StatusTab $w={25} />
      <StatusTab $w={36} />
      <StatusTab $w={36} />
      <StatusTab $w={73} />
      <StatusTab $w={60} />
    </StatusBar>

    <Dialog>
      <DialogTitle>
        选择参数化图形
        <TitleActions>
          <svg width="8" height="8" viewBox="0 0 8 8" fill="none" stroke="#fff">
            <rect x="0.5" y="0.5" width="7" height="7" />
            <path d="M0 1.5h8" strokeWidth="2" />
          </svg>
          <svg width="9" height="9" viewBox="0 0 9 9" stroke="#fff" strokeWidth="1.3">
            <path d="M1 1l7 7M8 1l-7 7" />
          </svg>
        </TitleActions>
      </DialogTitle>
      <DialogBody>
        <SideColumn>
          <SideLabel>参数化截面类型：</SideLabel>
          <TypeGrid>
            {thumbs.map((t, i) => (
              <TypeCell key={t.title} $selected={t.selected} $last={i % 3 === 2}>
                <StairThumb {...t} />
              </TypeCell>
            ))}
          </TypeGrid>
        </SideColumn>
        <SideColumn>
          <SideLabel>单位：  mm</SideLabel>
          <Preview><ParamDrawing /></Preview>
        </SideColumn>
      </DialogBody>
      <DialogFooter>
        <DialogButton $primary>确定</DialogButton>
        <DialogButton>取消</DialogButton>
      </DialogFooter>
      <ResizeGrip width="9" height="9" viewBox="0 0 9 9" fill="#777">
        <rect x="6" y="0" width="2" height="2" />
        <rect x="3" y="3" width="2" height="2" />
        <rect x="6" y="3" width="2" height="2" />
        <rect x="0" y="6" width="2" height="2" />
        <rect x="3" y="6" width="2" height="2" />
        <rect x="6" y="6" width="2" height="2" />
      </ResizeGrip>
    </Dialog>
  </Page>
)

export default App
